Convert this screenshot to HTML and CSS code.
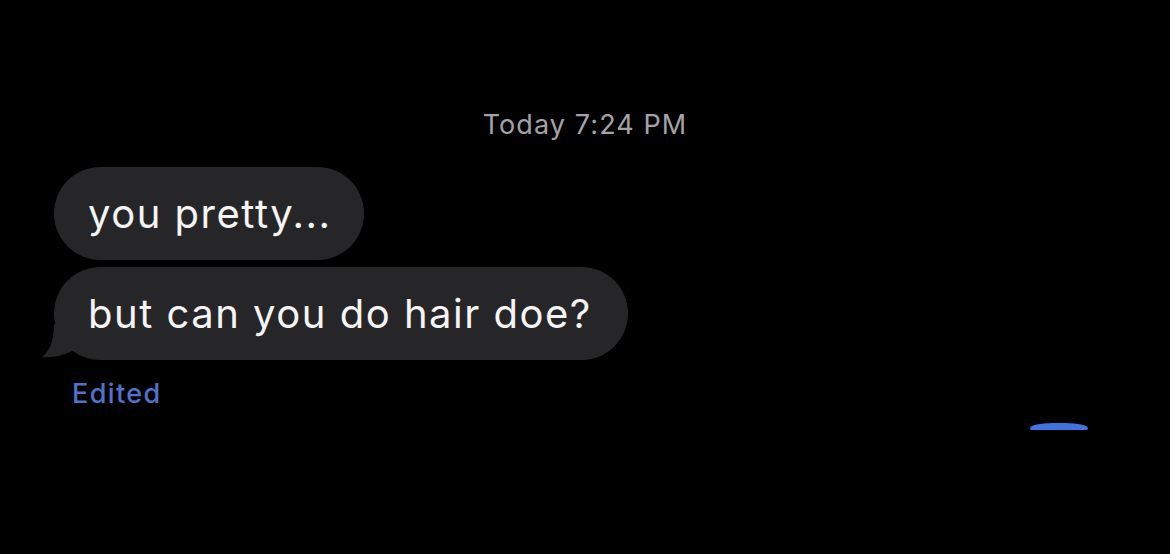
FILE: index.html
```html
<!DOCTYPE html>
<html lang="en">
<head>
<meta charset="utf-8">
<title>Messages</title>
<link rel="stylesheet" href="styles.css">
</head>
<body>
  <main class="thread">
    <div class="stamp">Today 7:24 PM</div>
    <div class="group">
      <div class="bubble">you pretty...</div>
      <div class="bubble bubble--last">but can you do hair doe?
        <svg class="tail" width="40" height="36" viewBox="0 0 40 36" aria-hidden="true">
          <path d="M14 0 C14 16 10 27 2 33 C12 34 22 32 32 27 L40 20 L40 0 Z" fill="#262628"/>
        </svg>
      </div>
      <div class="edited">Edited</div>
    </div>
    <div class="footer">
      <span class="pill"></span>
    </div>
  </main>
</body>
</html>
```

FILE: styles.css
```css
html, body {
  margin: 0;
  height: 100%;
  background: #000;
}

body {
  font-family: Inter, "Noto Sans", "Liberation Sans", sans-serif;
  color: #f4f4f4;
  overflow: hidden;
}

.thread {
  display: flex;
  flex-direction: column;
  padding-top: 107px;
}

.stamp {
  align-self: center;
  font-size: 27px;
  line-height: 36px;
  color: #a3a3a7;
  letter-spacing: 1.1px;
}

.group {
  display: flex;
  flex-direction: column;
  align-items: flex-start;
  gap: 7px;
  padding-left: 54px;
  margin-top: 24px;
}

.bubble {
  position: relative;
  background: #262628;
  border-radius: 47px;
  height: 93px;
  box-sizing: border-box;
  padding: 0 32px 0 34px;
  display: flex;
  align-items: center;
  font-size: 40px;
  letter-spacing: 1.5px;
}

.bubble--last {
  padding-right: 36px;
}

.tail {
  position: absolute;
  left: -14px;
  bottom: 0;
}

.edited {
  margin-top: 10px;
  margin-left: 18px;
  font-size: 27px;
  line-height: 34px;
  color: #5172cc;
  font-weight: 500;
  letter-spacing: 1.4px;
}

.footer {
  display: flex;
  justify-content: flex-end;
  padding-right: 82px;
  margin-top: 12px;
}

.pill {
  width: 58px;
  height: 7px;
  background: #3f74e0;
  border-radius: 29px 29px 4px 4px / 7px 7px 2px 2px;
}
```
